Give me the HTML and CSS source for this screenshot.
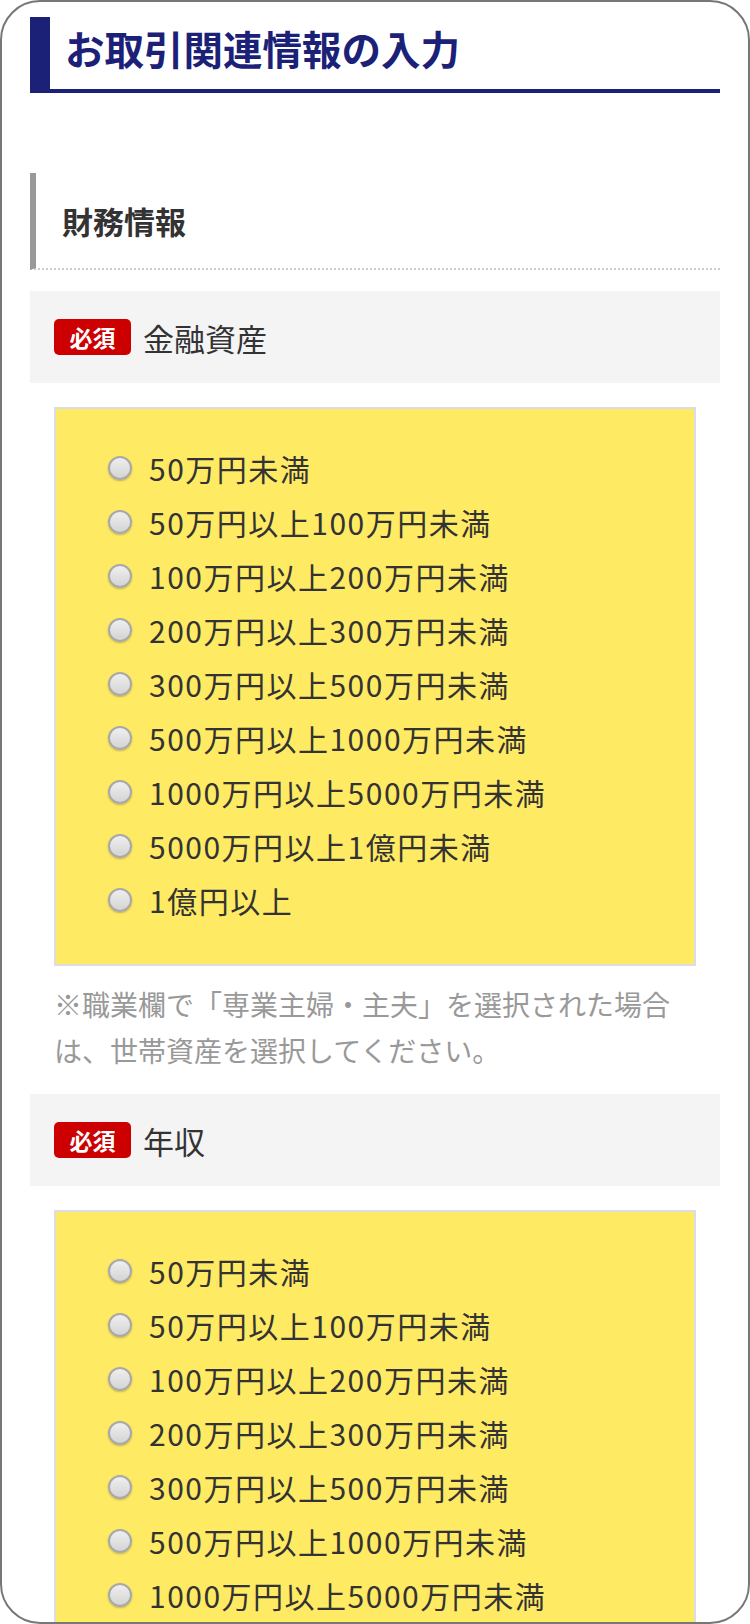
FILE: index.html
```html
<!DOCTYPE html>
<html lang="ja">
<head>
<meta charset="UTF-8">
<meta name="viewport" content="width=device-width, initial-scale=1.0">
<title>お取引関連情報の入力</title>
<link rel="stylesheet" href="styles.css">
</head>
<body>
<div class="frame">
    <h1 class="page-title">お取引関連情報の入力</h1>
    <h2 class="section-title">財務情報</h2>

    <div class="field">
        <div class="field-head">
            <span class="badge">必須</span>
            <span class="field-label">金融資産</span>
        </div>
        <ul class="choices">
            <li class="choice"><span class="radio"></span>50万円未満</li>
            <li class="choice"><span class="radio"></span>50万円以上100万円未満</li>
            <li class="choice"><span class="radio"></span>100万円以上200万円未満</li>
            <li class="choice"><span class="radio"></span>200万円以上300万円未満</li>
            <li class="choice"><span class="radio"></span>300万円以上500万円未満</li>
            <li class="choice"><span class="radio"></span>500万円以上1000万円未満</li>
            <li class="choice"><span class="radio"></span>1000万円以上5000万円未満</li>
            <li class="choice"><span class="radio"></span>5000万円以上1億円未満</li>
            <li class="choice"><span class="radio"></span>1億円以上</li>
        </ul>
        <p class="note">※職業欄で「専業主婦・主夫」を選択された場合は、世帯資産を選択してください。</p>
    </div>

    <div class="field">
        <div class="field-head">
            <span class="badge">必須</span>
            <span class="field-label">年収</span>
        </div>
        <ul class="choices">
            <li class="choice"><span class="radio"></span>50万円未満</li>
            <li class="choice"><span class="radio"></span>50万円以上100万円未満</li>
            <li class="choice"><span class="radio"></span>100万円以上200万円未満</li>
            <li class="choice"><span class="radio"></span>200万円以上300万円未満</li>
            <li class="choice"><span class="radio"></span>300万円以上500万円未満</li>
            <li class="choice"><span class="radio"></span>500万円以上1000万円未満</li>
            <li class="choice"><span class="radio"></span>1000万円以上5000万円未満</li>
            <li class="choice"><span class="radio"></span>5000万円以上1億円未満</li>
            <li class="choice"><span class="radio"></span>1億円以上</li>
        </ul>
    </div>
</div>
</body>
</html>
```

FILE: styles.css
```css
* {
    margin: 0;
    padding: 0;
    box-sizing: border-box;
    font-family: 'Noto Sans CJK JP', 'Noto Sans', sans-serif;
}
body {
    background: #fff;
}
.frame {
    width: 750px;
    height: 1624px;
    border: 2px solid #777;
    border-radius: 40px;
    overflow: hidden;
    padding: 15px 28px 0;
    background: #fff;
}
.page-title {
    border-left: 20px solid #1c2178;
    border-bottom: 4px solid #1c2178;
    padding: 0 0 10px 15px;
    font-size: 39.5px;
    line-height: 62px;
    font-weight: 700;
    color: #1c2178;
}
.section-title {
    margin-top: 80px;
    border-left: 6px solid #999;
    border-bottom: 2px dotted #ccc;
    padding-left: 26px;
    font-size: 31px;
    line-height: 95px;
    font-weight: 700;
    color: #333;
}
.field-head {
    margin-top: 21px;
    height: 92px;
    background: #f4f4f4;
    padding-left: 24px;
    display: flex;
    align-items: center;
}
.badge {
    width: 77px;
    height: 36px;
    background: #cc0000;
    border-radius: 5px;
    color: #fff;
    font-size: 23px;
    font-weight: 700;
    line-height: 36px;
    text-align: center;
}
.field-label {
    margin-left: 12px;
    font-size: 31px;
    color: #333;
}
.choices {
    list-style: none;
    margin: 24px 24px 0;
    border: 2px solid #dcdce4;
    background: #ffea64;
    padding: 32px 0 37px 52px;
}
.choice {
    display: flex;
    align-items: center;
    height: 54px;
    font-size: 30px;
    letter-spacing: 1.5px;
    color: #333;
}
.radio {
    width: 24px;
    height: 24px;
    margin-right: 17px;
    border-radius: 50%;
    border: 2px solid #a8a8a8;
    background: linear-gradient(#efefef, #d4d4d4);
    box-shadow: 0 1px 2px rgba(0, 0, 0, 0.25);
}
.note {
    margin: 15px 24px 15px;
    font-size: 28px;
    line-height: 46px;
    color: #999;
}
```
